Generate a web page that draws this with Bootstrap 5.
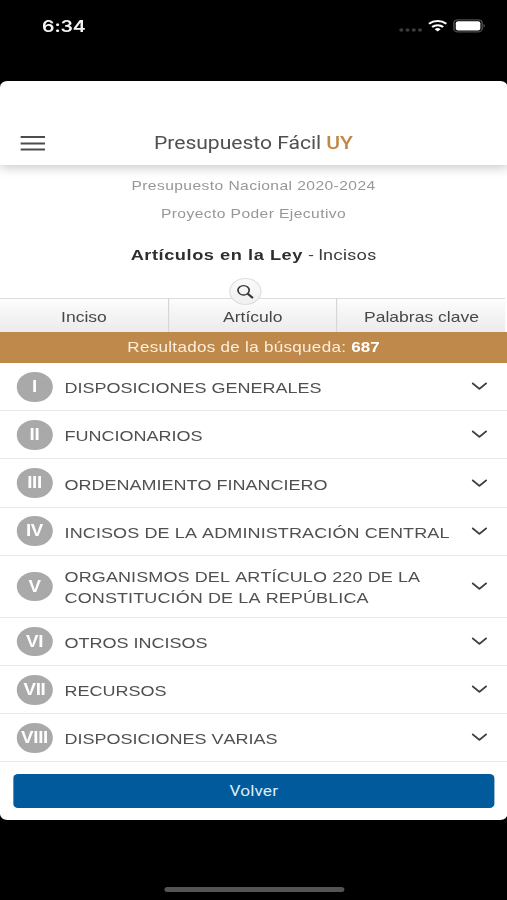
<!DOCTYPE html>
<html lang="es">
<head>
<meta charset="utf-8">
<meta name="viewport" content="width=device-width, initial-scale=1">
<title>Presupuesto Fácil UY</title>
<link href="https://cdn.jsdelivr.net/npm/bootstrap@5.3.0/dist/css/bootstrap.min.css" rel="stylesheet">
<style>
  html, body { background: #000; overflow: hidden; }
  body { font-family: "Liberation Sans", Arial, sans-serif; color: #505050; }
  svg { display: block; }
  /* Wide display: everything is laid out at 422.5px and stretched horizontally */
  .phone { width: 422.5px; height: 900px; transform: scaleX(1.2); transform-origin: 0 0; }
  .statusbar { height: 81px; padding: 15px 18.5px 0 35px; }
  .clock { font: 600 16.3px/22px Inter, sans-serif; color: #f4f4f4; letter-spacing: -.1px; }
  .sheet { height: 739px; border-radius: 6px; }
  .topbar { height: 84px; padding: 0 17px 9px; box-shadow: 0 2px 10px rgba(0,0,0,.24); }
  .topbar-title { font: 400 17.6px/26px Roboto, sans-serif; letter-spacing: -.03px; padding-right: 21px; }
  .gold { color: #c08848; font-weight: 500; }
  .intro { height: 133px; padding-top: 11px; }
  .intro-line { font-size: 13px; line-height: 20px; color: #979797; letter-spacing: .35px; margin-bottom: 8px; }
  .section-title { font-size: 15.2px; line-height: 22px; color: #2e2e2e; margin: 20px 0 0; letter-spacing: .45px; }
  .section-title span { font: 400 15.2px Roboto, sans-serif; letter-spacing: 0; color: #3c3c3c; }
  .tabs { height: 34px; padding-right: 1.5px; }
  .tab-item { font-size: 14.6px; padding-top: 5px; color: #474747; border-top: 1px solid #dcdcdc; background: linear-gradient(#fdfdfd, #ebebeb); }
  .tab-item + .tab-item { border-left: 1px solid #d6d6d6; }
  .search-btn { position: absolute; left: 190.8px; top: -20px; width: 27px; height: 27px; border: 1px solid #dedede; background: linear-gradient(#fafafa, #f0f0f0); }
  .results { height: 30.5px; padding-top: 1px; background: #be894a; color: #fbeedd; font-size: 14.2px; letter-spacing: .25px; }
  .results b { color: #fff; letter-spacing: 0; }
  .entries { padding-top: .7px; }
  .entry { height: 48.15px; padding: 0 16.5px 0 14px; border-bottom: 1.5px solid #e9e9e9; font-size: 15px; line-height: 21px; font-kerning: none; }
  .entry.tall { height: 62.3px; }
  .entry.long .entry-label { letter-spacing: .09px; }
  .entry-label { padding-top: 2px; }
  .numeral { width: 29.5px; height: 29.5px; margin-right: 10.3px; background: #a9a9a9; color: #fff; font-size: 15.6px; font-weight: 700; line-height: 1; letter-spacing: -.25px; }
  .back-btn { margin: 11.3px 10.5px 0 11px; height: 34px; border-radius: 4px; background: #005a9c; color: #dcecf8; font: 400 14.4px/20px Roboto, sans-serif; letter-spacing: .1px; }
  .back-btn span { display: block; padding-top: 2px; }
  .back-btn:hover { background: #004c85; color: #fff; }
  .home-bar { width: 150px; height: 5px; margin: 67px 0 0 136.7px; background: #545454; }
</style>
</head>
<body>
<div class="phone">
  <div class="statusbar d-flex justify-content-between align-items-start">
    <div class="clock">6:34</div>
    <svg width="72" height="24" viewBox="0 0 72 24">
      <g fill="#3c3c3c"><circle cx="2.4" cy="15" r="1.7"/><circle cx="7.6" cy="15" r="1.7"/><circle cx="12.8" cy="15" r="1.7"/><circle cx="18" cy="15" r="1.7"/></g>
      <g fill="none" stroke="#fff" stroke-width="2"><path d="M25.5 8.7a11 11 0 0 1 14.4 0"/><path d="M28.1 12a6.9 6.9 0 0 1 9.2 0"/></g>
      <path fill="#fff" d="M32.7 16.6l-2.5-2.4a3.7 3.7 0 0 1 5 0z"/>
      <rect x="46.2" y="4.8" width="23.6" height="12" rx="3.4" fill="none" stroke="#4a4a4a" stroke-width="1.3"/>
      <rect x="47.8" y="6.2" width="20.5" height="9.2" rx="2" fill="#fff"/>
      <path d="M71 9a2 2 0 0 1 0 3.6z" fill="#6a6a6a"/>
    </svg>
  </div>

  <main class="sheet bg-white overflow-hidden">
    <header class="topbar position-relative d-flex align-items-end">
      <svg width="21" height="17" viewBox="0 0 21 17" class="mb-1 flex-shrink-0" role="img" aria-label="Menú"><path d="M0 2.1h20.5M0 8.4h20.5M0 14.6h20.5" stroke="#4c4c4c" stroke-width="2"/></svg>
      <div class="topbar-title flex-grow-1 text-center">Presupuesto Fácil <span class="gold">UY</span></div>
    </header>

    <section class="intro text-center">
      <p class="intro-line">Presupuesto Nacional 2020-2024</p>
      <p class="intro-line">Proyecto Poder Ejecutivo</p>
      <h1 class="section-title fw-bold">Artículos en la Ley <span>- Incisos</span></h1>
    </section>

    <nav class="tabs position-relative d-flex text-center">
      <div class="tab-item w-100 d-flex align-items-center justify-content-center">Inciso</div>
      <div class="tab-item w-100 d-flex align-items-center justify-content-center">Artículo</div>
      <div class="tab-item w-100 d-flex align-items-center justify-content-center">Palabras clave</div>
      <div class="search-btn rounded-circle d-flex align-items-center justify-content-center">
        <svg width="15" height="15" viewBox="0 0 15 15" fill="none" stroke="#363636"><circle cx="6" cy="6.3" r="4.7" stroke-width="1.4"/><path d="M9.6 9.9l3.6 3.6" stroke-width="2" stroke-linecap="round"/></svg>
      </div>
    </nav>

    <div class="results d-flex align-items-center justify-content-center"><div>Resultados de la búsqueda: <b>687</b></div></div>

    <div class="entries"></div>
    <div class="d-grid"><button class="btn back-btn border-0 p-0" type="button"><span>Volver</span></button></div>
  </main>
  <div class="home-bar rounded-pill"></div>
</div>

<script>
  const titles = [
    ["I", "DISPOSICIONES GENERALES"],
    ["II", "FUNCIONARIOS"],
    ["III", "ORDENAMIENTO FINANCIERO"],
    ["IV", "INCISOS DE LA ADMINISTRACIÓN CENTRAL"],
    ["V", "ORGANISMOS DEL ARTÍCULO 220 DE LA<br>CONSTITUCIÓN DE LA REPÚBLICA"],
    ["VI", "OTROS INCISOS"],
    ["VII", "RECURSOS"],
    ["VIII", "DISPOSICIONES VARIAS"]
  ];
  document.querySelector(".entries").innerHTML = titles.map(([n, t]) => `
    <div class="entry d-flex align-items-center${t.includes("<br>") ? " tall" : ""}${t.length > 30 ? " long" : ""}">
      <span class="numeral rounded-circle flex-shrink-0 d-flex align-items-center justify-content-center">${n}</span>
      <span class="entry-label flex-grow-1 text-nowrap">${t}</span>
      <svg width="13" height="9" viewBox="0 0 13 9" class="flex-shrink-0" fill="none" stroke="#3f3f3f" stroke-width="1.6" stroke-linecap="round" stroke-linejoin="round"><path d="M.9 1.4l5.6 5.4 5.6-5.4"/></svg>
    </div>`).join("");
</script>
<script src="https://cdn.jsdelivr.net/npm/bootstrap@5.3.0/dist/js/bootstrap.bundle.min.js"></script>
</body>
</html>
